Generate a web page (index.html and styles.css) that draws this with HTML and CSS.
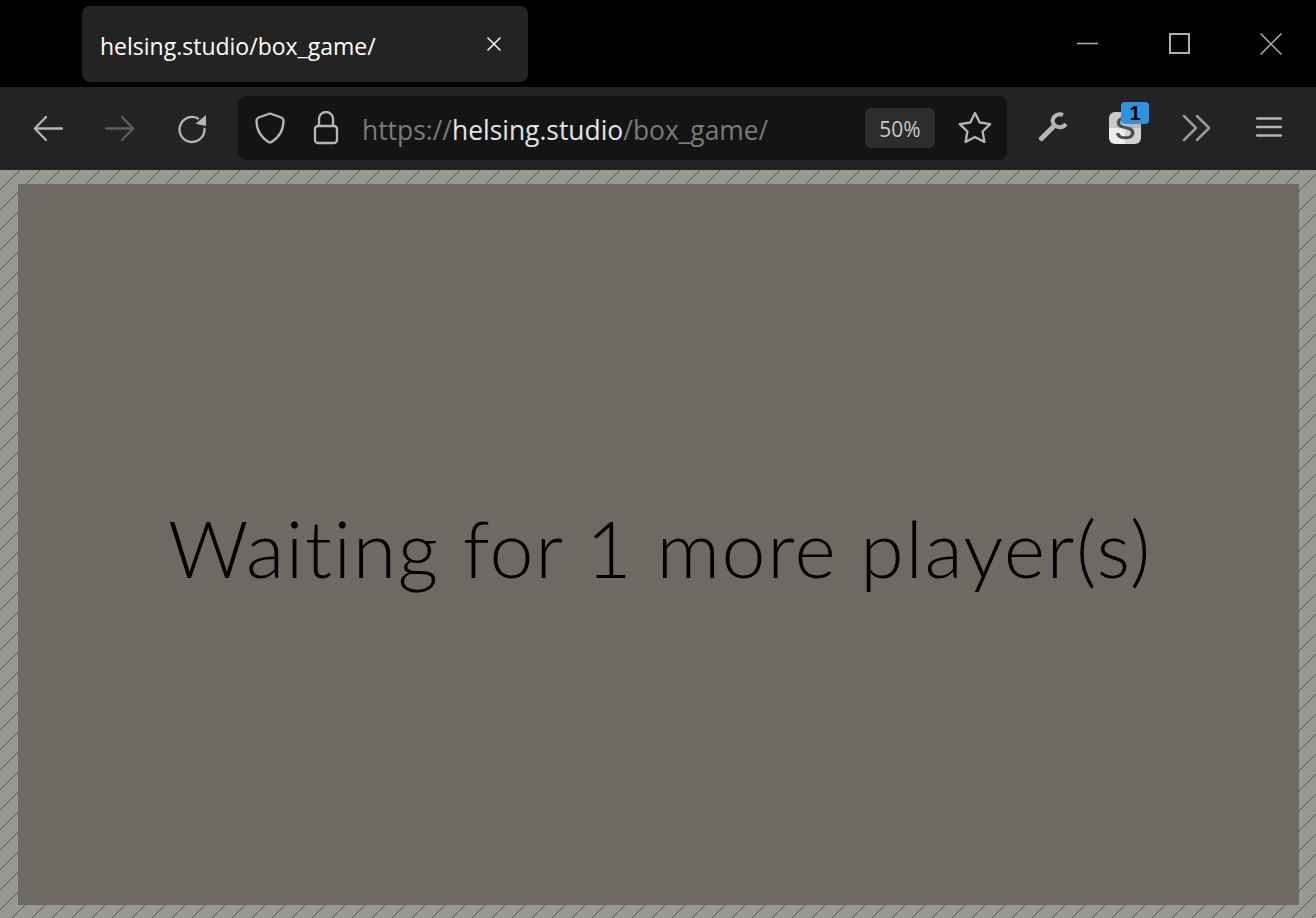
FILE: index.html
```html
<!DOCTYPE html>
<html lang="en">
<head>
<meta charset="utf-8">
<title>helsing.studio/box_game/</title>
<link rel="stylesheet" href="styles.css">
</head>
<body>
<div class="window">
  <header class="titlebar">
    <div class="tab">
      <span class="tab-title">helsing.studio/box_game/</span>
      <svg class="tab-close" width="16" height="16" viewBox="0 0 16 16"><path d="M1.5 1.5l13 13M14.5 1.5l-13 13"/></svg>
    </div>
    <div class="win-controls">
      <div class="win-btn"><svg width="22" height="22" viewBox="0 0 22 22"><path d="M0 10.5h21"/></svg></div>
      <div class="win-btn"><svg width="22" height="22" viewBox="0 0 22 22"><rect x="1" y="1" width="19" height="19"/></svg></div>
      <div class="win-btn"><svg width="22" height="22" viewBox="0 0 22 22"><path d="M0.5 0.5l21 21M21.5 0.5l-21 21"/></svg></div>
    </div>
  </header>
  <nav class="toolbar">
    <div class="tool"><svg class="ico" width="32" height="32" viewBox="0 0 32 32"><path d="M3 16.500h27M14 5L2.800 16.500 14 28"/></svg></div>
    <div class="tool"><svg class="ico dim" width="32" height="32" viewBox="0 0 32 32"><path d="M29 16.500H2M18 5l11.200 11.500L18 28"/></svg></div>
    <div class="tool"><svg class="ico" width="32" height="32" viewBox="0 0 32 32"><path d="M22 6.500A12.500 12.500 0 1 0 28.500 17"/><path class="solid" d="M30 3V14L19.500 11.800z"/></svg></div>
    <div class="urlbar">
      <svg class="ico shield" width="32" height="34" viewBox="0 0 32 34"><path d="M16 2.500L26 6c2 .7 3.500 1.500 3.500 3.500 0 9-4 16.500-12 21.500-1 .6-2 .6-3 0-8-5-12-12.500-12-21.500C2.500 7.500 4 6.700 6 6z"/></svg>
      <svg class="ico lock" width="26" height="34" viewBox="0 0 26 34"><path d="M6 15V8a7 7 0 0 1 14 0v7"/><rect x="2" y="15" width="22" height="17" rx="3"/></svg>
      <div class="url"><span class="url-dim">https://</span><span class="url-host">helsing.studio</span><span class="url-dim">/box_game/</span></div>
      <div class="zoom-badge">50%</div>
      <svg class="ico star" width="34" height="34" viewBox="0 0 34 34"><path d="M17 2l4.700 9.500 10.500 1.600-7.600 7.400 1.800 10.400-9.400-5-9.400 5 1.800-10.400-7.600-7.400 10.500-1.600z"/></svg>
    </div>
    <div class="tool tool-first"><svg class="ico wrench" width="32" height="32" viewBox="0 0 32 32"><path class="thick" d="M3.500 26.500L16 14"/><path class="thick-arc" d="M25 3A7.500 7.500 0 0 0 14.500 9 7.500 7.500 0 0 0 28 12"/></svg></div>
    <div class="tool">
      <div class="ext">
        <span class="ext-s">S</span>
        <span class="ext-badge">1</span>
      </div>
    </div>
    <div class="tool"><svg class="ico chev" width="32" height="32" viewBox="0 0 32 32"><path d="M3 4l12 12L3 28M16 4l12 12-12 12"/></svg></div>
    <div class="tool"><svg class="ico" width="32" height="32" viewBox="0 0 32 32"><path d="M4 6.500h24M4 15h24M4 23.500h24"/></svg></div>
  </nav>
  <main class="page">
    <section class="stage">
      <h1 class="status">Waiting for 1 more player(s)</h1>
    </section>
  </main>
</div>
</body>
</html>
```
FILE: styles.css
```css
* { box-sizing: border-box; }
html, body { margin: 0; height: 100%; overflow: hidden; background: #000; }
.window { display: flex; flex-direction: column; height: 918px; font-family: "Open Sans", "Noto Sans", sans-serif; }

.titlebar { display: flex; height: 87px; flex: none; background: #000; padding-left: 82px; }
.tab { width: 446px; height: 76px; margin-top: 6px; background: #232323; border-radius: 8px; display: flex; align-items: center; padding: 0 18px; justify-content: space-between; }
.tab-title { color: #fff; font-size: 23px; line-height: 1; white-space: nowrap; margin-top: 4px; }
.tab-close { fill: none; stroke: #f0f0f0; stroke-width: 1.6; margin-right: 8px; }

.win-controls { margin-left: auto; display: flex; margin-right: -1px; }
.win-btn { width: 92px; height: 87px; display: flex; align-items: center; justify-content: center; }
.win-btn svg { fill: none; stroke: #b0b0b0; stroke-width: 2; }
.win-btn:nth-child(1) svg { stroke-width: 1.5; margin-left: 1px; }
.win-btn:nth-child(2) svg { margin-left: 2px; }
.win-btn:nth-child(3) svg { stroke-width: 1.5; }

.toolbar { display: flex; align-items: flex-start; height: 83px; flex: none; background: #232323; padding: 9px 0 0 12px; }
.tool { width: 72px; height: 64px; flex: none; display: flex; align-items: center; justify-content: center; }
.tool-first { margin-left: 10px; }
.ico { fill: none; stroke: #b5b5b5; stroke-width: 2.3; stroke-linecap: round; stroke-linejoin: round; flex: none; }
.ico.dim { stroke: #5d5d5d; }
.ico .solid { fill: #b5b5b5; stroke: none; }
.ico .thick { stroke-width: 5; }
.ico .thick-arc { stroke-width: 4; stroke-linecap: butt; }
.ico.wrench { margin-left: 2px; }
.ico.chev { stroke: #9a9a9a; stroke-width: 2.5; }

.urlbar { width: 769px; height: 64px; flex: none; margin-left: 10px; background: #141414; border-radius: 8px; display: flex; align-items: center; padding-left: 16px; }
.lock { margin-left: 27px; }
.url { margin-left: 23px; font-size: 26.4px; line-height: 1; white-space: nowrap; margin-top: 4px; width: 500px; }
.url-dim { color: #7b7b7b; }
.url-host { color: #e4e4e4; }
.zoom-badge { width: 70px; height: 40px; flex: none; margin-left: 3px; padding-top: 2px; background: #2c2c2c; border-radius: 6px; color: #c8c8c8; font-size: 21px; display: flex; align-items: center; justify-content: center; }
.star { margin-left: 23px; }

.ext { position: relative; width: 32px; height: 32px; border-radius: 6px; background: conic-gradient(#b9b9b9 0 90deg, #d2d2d2 90deg 180deg, #ececec 180deg 270deg, #c8c8c8 270deg); display: flex; align-items: center; justify-content: center; }
.ext-s { color: #4a4a4a; font: 400 31px/1 "Liberation Sans", sans-serif; -webkit-text-stroke: 0.4px #4a4a4a; }
.ext-badge { position: absolute; left: 12px; top: -10px; width: 28px; height: 22px; border-radius: 4px; background: #3092dd; color: #000; font: 700 20px/22px "Liberation Sans", sans-serif; text-align: center; }

.page { flex: 1; min-height: 0; padding: 14px 17px 13px 18px; background-color: #999993; background-image: repeating-linear-gradient(135deg, #56564f 0, #56564f 0.7px, transparent 0.7px, transparent 14.142px); }
.stage { height: 100%; padding-left: 3px; background: #6e6962; display: flex; align-items: center; justify-content: center; }
.status { margin: 0; color: #000; font-family: Lato, sans-serif; font-weight: 300; font-size: 79px; letter-spacing: 1.57px; line-height: 1; white-space: nowrap; position: relative; top: 3px; }
```
